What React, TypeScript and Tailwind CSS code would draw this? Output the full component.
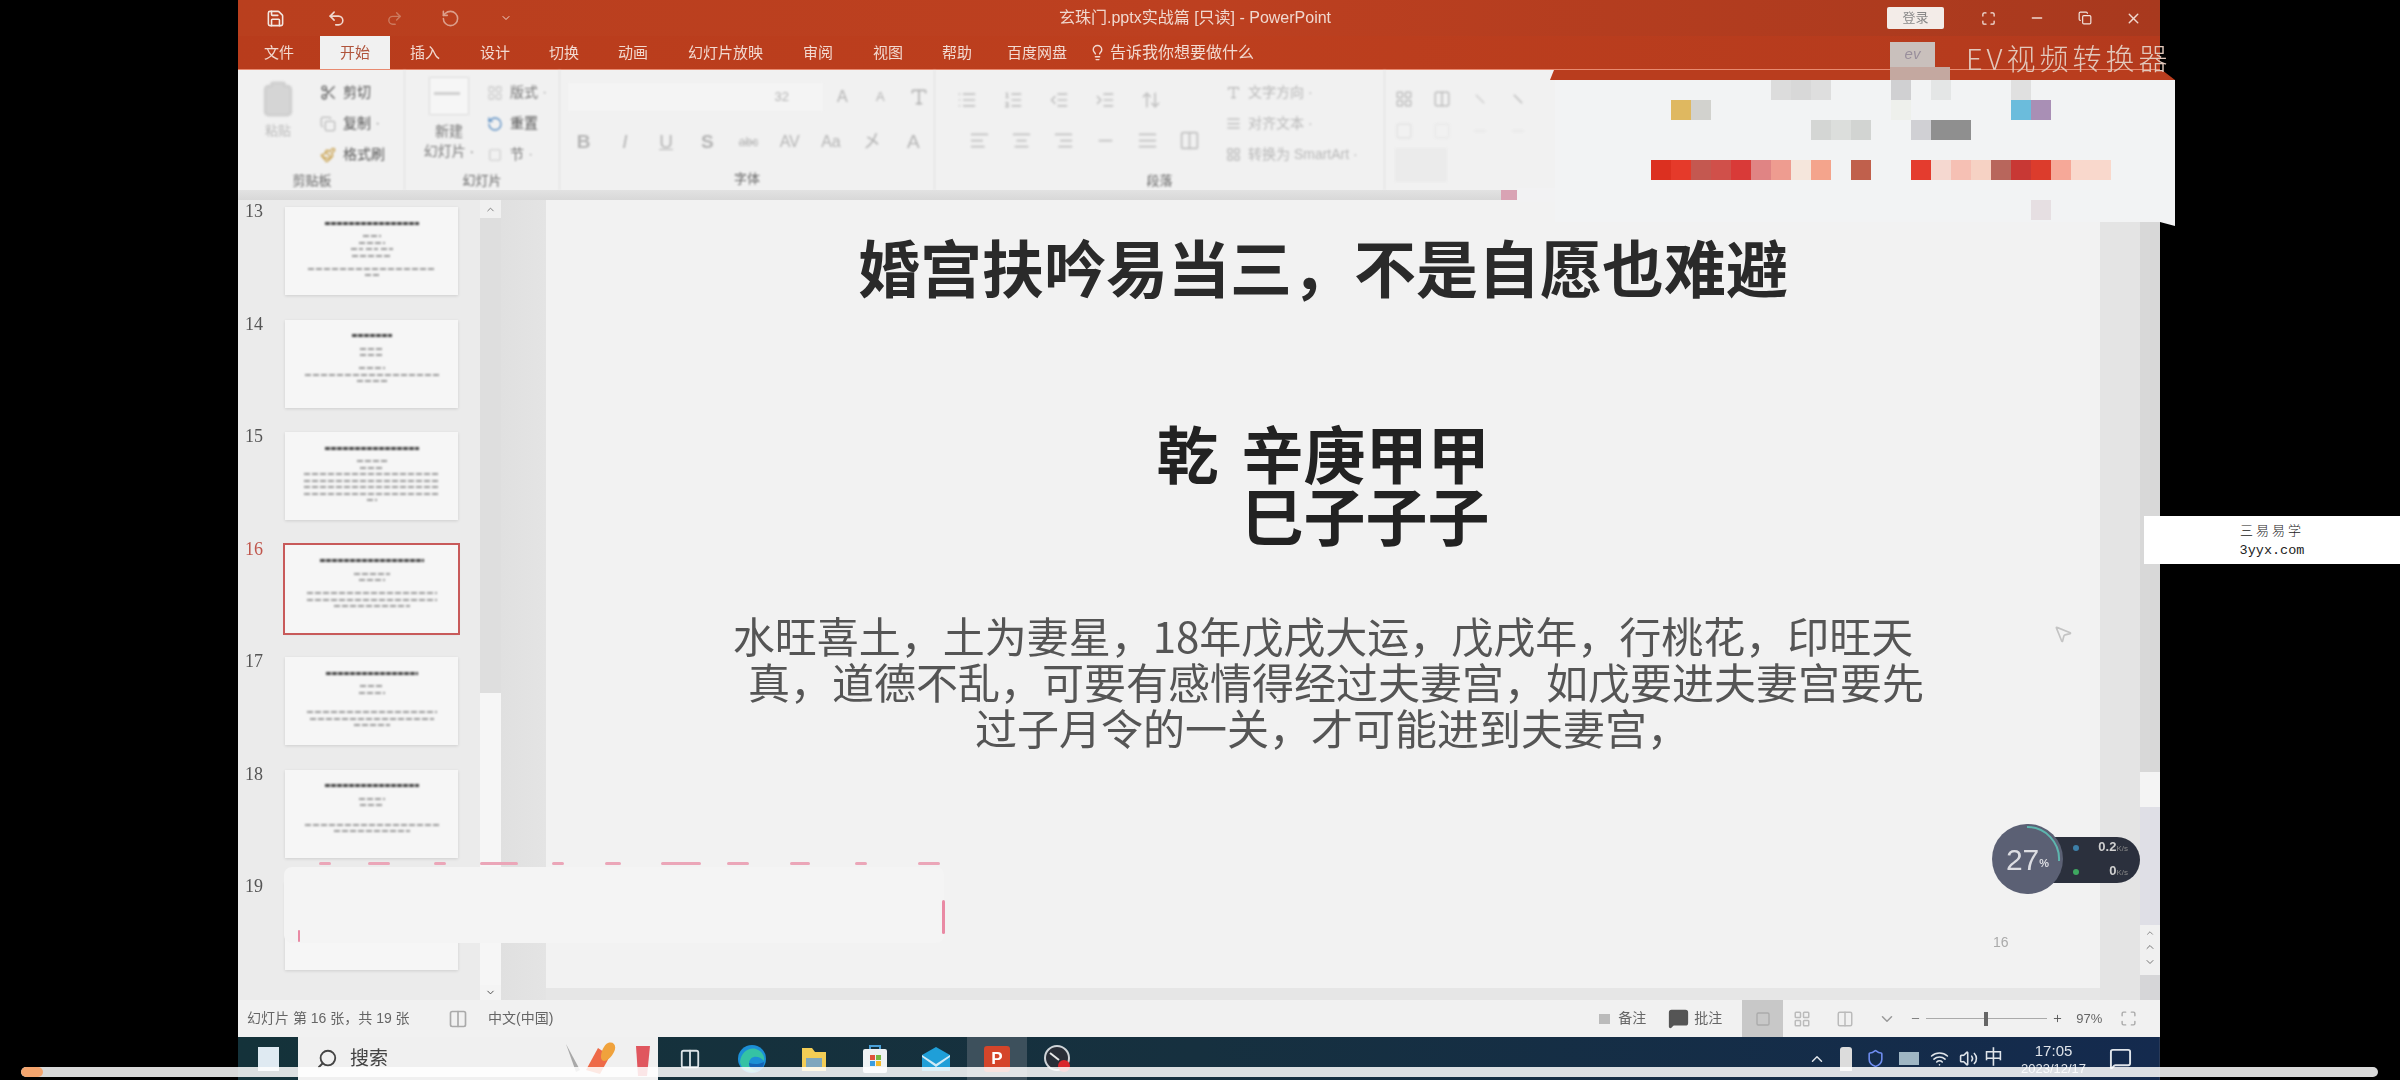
import React from 'react';
import {
  AlignCenter, AlignJustify, AlignLeft, AlignRight, ArrowUpDown, ChevronDown, ChevronUp, Clipboard, Columns2, Copy,
  IndentDecrease, IndentIncrease, LayoutGrid, Lightbulb, List, ListOrdered, Maximize, MessageSquare, Minus,
  MousePointer2, Paintbrush, Plus, Redo2, RotateCcw, Save, Scissors, Search, Shield, Square, Type, Undo2, Volume2, Wifi, X,
} from 'lucide-react';

const sans = "font-['Liberation_Sans','Noto_Sans_CJK_SC',sans-serif]";

const tabs = [
  { label: '文件', w: 82 },
  { label: '开始', w: 70, active: true },
  { label: '插入', w: 70 },
  { label: '设计', w: 70 },
  { label: '切换', w: 68 },
  { label: '动画', w: 70 },
  { label: '幻灯片放映', w: 115 },
  { label: '审阅', w: 70 },
  { label: '视图', w: 70 },
  { label: '帮助', w: 68 },
  { label: '百度网盘', w: 92 },
];

const thumbs = [
  { n: 13, lines: [[94], [], [18], [26], [12, 12, 12], [40], [], [128], [14]] },
  { n: 14, lines: [[40], [], [24], [24], [], [26], [134], [30]] },
  { n: 15, lines: [[94], [], [30], [24], [136], [136], [136], [136], [10]] },
  { n: 16, active: true, lines: [[104], [], [36], [26], [], [130], [130], [76]] },
  { n: 17, lines: [[92], [], [24], [26], [], [], [130], [124], [36]] },
  { n: 18, lines: [[94], [], [26], [24], [], [], [134], [76]] },
  { n: 19, lines: [] },
];

// 幻灯片上方遮挡块里的马赛克: [列, 行, 颜色]
const mosaic: [number, number, string][] = [
  [12, 1, '#dcdcdc'], [13, 1, '#d8d8d8'], [14, 1, '#dedede'], [18, 1, '#d0d0d2'], [20, 1, '#e4e6e6'], [24, 1, '#e0e0e0'],
  [7, 2, '#dfb860'], [8, 2, '#d2d2ce'], [24, 2, '#6bbcdc'], [25, 2, '#a98fb5'], [18, 2, '#eef0ec'],
  [14, 3, '#d4d6d4'], [15, 3, '#dcdedc'], [16, 3, '#d2d4d2'], [19, 3, '#d0d0d4'], [20, 3, '#8f8f8f'], [21, 3, '#8f8f8f'],
  [6, 5, '#dc3020'], [7, 5, '#e53a2a'], [8, 5, '#c45850'], [9, 5, '#d0504a'], [10, 5, '#d93a38'], [11, 5, '#e08484'], [12, 5, '#ee9c90'],
  [13, 5, '#f5e6dc'], [14, 5, '#f4a48c'], [16, 5, '#c0604c'], [19, 5, '#e43c2e'], [20, 5, '#f5d8d0'], [21, 5, '#f6c0b4'], [22, 5, '#f6d2c4'],
  [23, 5, '#b8665c'], [24, 5, '#c83834'], [25, 5, '#dc3c2c'], [26, 5, '#f6a898'], [27, 5, '#f9d8cc'], [28, 5, '#f9d8cc'],
  [25, 7, '#e6dfe2'],
];

const pinkDashes = [
  [319, 12], [368, 22], [434, 12], [480, 38], [552, 12], [605, 16], [661, 40], [727, 22], [790, 20], [855, 12], [918, 22],
];

const Thumb: React.FC<{ n: number; active?: boolean; lines: number[][] }> = ({ n, active, lines }) => (
  <div className="flex h-[112.5px] items-start">
    <div className={`-mt-[6px] w-[47px] pl-[7px] font-['Liberation_Serif',serif] text-[18px] leading-[20px] ${active ? 'text-[#c0564c]' : 'text-[#555]'}`}>{n}</div>
    <div className={`flex h-[88px] w-[173px] flex-col items-center bg-[#f6f6f6] pt-[13px] shadow-[0_1px_3px_rgba(0,0,0,0.12)] ${active ? 'outline-2 outline-[#c85a5a]' : ''}`}>
      {lines.map((row, i) => (
        <div key={i} className="flex h-[6.5px] items-center justify-center gap-[3px]">
          {row.map((w, j) => (
            <div
              key={j}
              className={`blur-[0.8px] ${i === 0 ? 'h-[3px] bg-[repeating-linear-gradient(90deg,#444_0_5px,transparent_5px_6px)]' : 'h-[2px] bg-[repeating-linear-gradient(90deg,#999_0_6px,transparent_6px_8px)]'}`}
              style={{ width: w }}
            />
          ))}
        </div>
      ))}
    </div>
  </div>
);

const SmallTool: React.FC<{ icon: React.ReactNode; label: string; caret?: boolean; className?: string }> = ({ icon, label, caret, className = '' }) => (
  <div className={`flex h-[31px] items-center gap-[5px] whitespace-nowrap text-[14px] ${className}`}>
    <span className="flex w-[20px] justify-center">{icon}</span>
    <span>{label}</span>
    {caret && <span className="text-[10px]">·</span>}
  </div>
);

const Group: React.FC<{ label: string; className: string; children: React.ReactNode }> = ({ label, className, children }) => (
  <div className={`flex h-full shrink-0 flex-col border-r border-[#e2e2e2] ${className}`}>
    <div className="flex-1">{children}</div>
    <div className="h-[22px] pt-[1px] text-center text-[13px] leading-[20px] text-[#666]">{label}</div>
  </div>
);

const Ribbon: React.FC = () => (
  <div className="flex h-[130px] shrink-0 flex-col bg-[#f1f1f1]">
    <div className="flex h-[120px] blur-[0.9px]">
      <Group label="剪贴板" className="w-[167px] pr-[18px]">
        <div className="flex pt-[7px]">
          <div className="flex w-[80px] flex-col items-center pt-[3px] text-[13px] text-[#bbb]">
            <Clipboard size={38} strokeWidth={2} className="fill-[#d5d5d5] text-[#d0d0d0]" />
            <span className="mt-[3px]">粘贴</span>
          </div>
          <div className="text-[#555]">
            <SmallTool icon={<Scissors size={17} className="text-[#666]" />} label="剪切" />
            <SmallTool icon={<Copy size={16} className="text-[#bbb]" />} label="复制" caret />
            <SmallTool icon={<Paintbrush size={16} className="text-[#c9a04a]" />} label="格式刷" />
          </div>
        </div>
      </Group>
      <Group label="幻灯片" className="w-[155px]">
        <div className="flex pt-[7px]">
          <div className="flex w-[88px] flex-col items-center text-[14px] leading-[20px] text-[#777]">
            <div className="h-[38px] w-[40px] border border-[#dcdcdc] bg-[#f6f6f6] pl-[4px] pt-[14px]">
              <div className="h-[3px] w-[26px] bg-[#d0d0d0]" />
            </div>
            <span className="mt-[6px]">新建</span>
            <span>幻灯片 ·</span>
          </div>
          <div className="text-[#777]">
            <SmallTool icon={<LayoutGrid size={16} className="text-[#ccc]" />} label="版式" caret className="-ml-[8px]" />
            <SmallTool icon={<RotateCcw size={16} className="text-[#5b8fc4]" />} label="重置" className="-ml-[8px] text-[#555]" />
            <SmallTool icon={<Square size={14} className="text-[#ccc]" />} label="节" caret className="-ml-[8px]" />
          </div>
        </div>
      </Group>
      <Group label="字体" className="w-[375px] text-[#b4b4b4]">
        <div className="flex h-[26px] items-center mt-[14px] pl-[8px]">
          <div className="flex h-[28px] w-[255px] items-center justify-end bg-[#f4f4f4] pr-[34px] text-[13px]">32</div>
          <span className="w-[41px] pl-[14px] text-[16px]">A</span>
          <span className="w-[41px] pl-[12px] text-[13px]">A</span>
          <Type size={20} className="ml-[4px]" />
        </div>
        <div className="mt-[16px] flex pl-[3px] text-[19px] leading-[32px]">
          {['B', 'I', 'U', 'S', 'abc', 'AV', 'Aa', '㐅', 'A'].map((t, i) => (
            <span key={i} className={`w-[42px] text-center ${t === 'B' ? 'font-bold' : ''} ${t === 'I' ? 'italic' : ''} ${t === 'U' ? 'underline' : ''} ${t === 'S' ? 'font-bold' : ''} ${t === 'abc' ? 'text-[12px] line-through' : ''} ${t === 'Aa' || t === 'AV' ? 'text-[16px]' : ''}`}>{t}</span>
          ))}
        </div>
      </Group>
      <Group label="段落" className="w-[450px] text-[#c2c2c2]">
        <div className="flex">
          <div className="w-[288px] pt-[20px] pl-[22px]">
            <div className="flex items-center gap-[26px]">
              <List size={20} />
              <ListOrdered size={20} />
              <IndentDecrease size={20} />
              <IndentIncrease size={20} />
              <ArrowUpDown size={20} />
            </div>
            <div className="mt-[20px] flex items-center gap-[21px] pl-[12px]">
              <AlignLeft size={21} />
              <AlignCenter size={21} />
              <AlignRight size={21} />
              <Minus size={21} />
              <AlignJustify size={21} />
              <Columns2 size={21} />
            </div>
          </div>
          <div className="pt-[7px] text-[#b8b8b8]">
            <SmallTool icon={<Type size={15} />} label="文字方向 ·" />
            <SmallTool icon={<AlignJustify size={15} />} label="对齐文本 ·" />
            <SmallTool icon={<LayoutGrid size={15} />} label="转换为 SmartArt ·" />
          </div>
        </div>
      </Group>
      <div className="flex w-[170px] shrink-0 flex-col pl-[10px] pt-[20px] text-[#cfcfcf]">
        <div className="flex gap-[20px]">
          <LayoutGrid size={18} className="text-[#bdbdbd]" />
          <Columns2 size={18} className="text-[#bdbdbd]" />
          <Minus size={18} className="rotate-45" />
          <Minus size={18} className="rotate-45 text-[#bdbdbd]" />
        </div>
        <div className="mt-[14px] flex gap-[20px]">
          <Square size={18} className="text-[#e2e2e2]" />
          <Square size={18} className="text-[#e8e8e8]" />
          <Minus size={18} className="text-[#e6e6e6]" />
          <Minus size={18} className="text-[#e6e6e6]" />
        </div>
        <div className="mt-[8px] h-[34px] w-[52px] bg-[#ebebeb]" />
      </div>
    </div>
    <div className="h-[10px] bg-linear-to-b from-[#e2e2e2] to-[#d8d8d8]" />
  </div>
);

const SlideContent: React.FC = () => (
  <div className="flex h-full flex-1 flex-col items-center bg-[#f2f2f2] pt-[35px] font-['Noto_Sans_CJK_SC',sans-serif] blur-[0.6px]">
    <h1 className="text-[62px] font-bold leading-[62px] text-[#2a2a2a]">婚宫扶吟易当三，不是自愿也难避</h1>
    <div className="mt-[124px] w-[333px] text-[62px] font-bold leading-[62px] text-[#222]">
      <div className="flex justify-between">
        <span>乾</span>
        <span>辛庚甲甲</span>
      </div>
      <div className="text-right">巳子子子</div>
    </div>
    <div className="mt-[67px] text-center text-[42px] leading-[46px] text-[#555]">
      <p>水旺喜土，土为妻星，18年戊戌大运，戊戌年，行桃花，印旺天</p>
      <p className="ml-[26px]">真，道德不乱，可要有感情得经过夫妻宫，如戊要进夫妻宫要先</p>
      <p className="ml-[18px]">过子月令的一关，才可能进到夫妻宫，</p>
    </div>
  </div>
);

const TaskIcons: React.FC = () => (
  <div className="flex h-full items-center">
    <div className="flex h-full w-[63px] items-center justify-center"><Columns2 size={22} className="text-[#dbe3e6]" /></div>
    <div className="flex h-full w-[62px] items-center justify-center">
      <svg width="30" height="30" viewBox="0 0 30 30">
        <circle cx="15" cy="15" r="14" fill="#1c8fd6" />
        <path d="M3 18C4 8 12 3 19 5c6 2 9 7 8 12-5-6-14-6-15 2-1 5 4 8 9 8-9 3-17-2-18-9z" fill="#35c2a4" />
        <path d="M12 19c0 5 5 8 10 7 3-1 5-4 5-8-4 2-9 3-15 1z" fill="#1463b5" />
      </svg>
    </div>
    <div className="flex h-full w-[62px] items-center justify-center">
      <svg width="28" height="28" viewBox="0 0 28 28">
        <path d="M2 3h10l3 4h11v19H2z" fill="#f3cd55" />
        <path d="M6 13h16v9H6z" fill="#7fa7bd" />
      </svg>
    </div>
    <div className="flex h-full w-[60px] items-center justify-center">
      <svg width="26" height="30" viewBox="0 0 26 30">
        <rect x="1" y="5" width="24" height="24" rx="2" fill="#eef2f4" />
        <path d="M8 5V2h10v3" fill="none" stroke="#4aa0d8" strokeWidth="2" />
        <rect x="8" y="11" width="5" height="5" fill="#e0533c" />
        <rect x="14" y="11" width="5" height="5" fill="#76b843" />
        <rect x="8" y="17" width="5" height="5" fill="#3b9de0" />
        <rect x="14" y="17" width="5" height="5" fill="#f3bb2e" />
      </svg>
    </div>
    <div className="flex h-full w-[62px] items-center justify-center">
      <svg width="32" height="28" viewBox="0 0 32 28">
        <path d="M2 10 16 2l14 8v16H2z" fill="#1f9fd8" />
        <path d="M2 10l14 9 14-9v2L16 22 2 12z" fill="#cfeaf6" />
      </svg>
    </div>
    <div className="flex h-full w-[60px] items-center justify-center bg-[#3d505c]">
      <div className="flex h-[26px] w-[26px] items-center justify-center rounded-[3px] bg-[#d5452a] text-[17px] font-bold text-white">P</div>
    </div>
    <div className="flex h-full w-[60px] items-center justify-center">
      <svg width="30" height="30" viewBox="0 0 30 30">
        <circle cx="15" cy="14" r="12" fill="#2a2f38" stroke="#cfd4d8" strokeWidth="2" />
        <path d="M8 9l9 7" stroke="#e8e8e8" strokeWidth="2" />
        <circle cx="22" cy="22" r="6" fill="#d8262c" />
      </svg>
    </div>
  </div>
);

const App: React.FC = () => (
  <div className={`relative h-[1080px] w-[2400px] overflow-hidden bg-black ${sans}`}>
    <div className="ml-[238px] flex h-full w-[1922px] flex-col">
      {/* Title bar */}
      <div className="flex h-[36px] shrink-0 items-center bg-linear-to-r from-[#b93f1e] via-[#bd4020] to-[#a8391e] pl-[28px] text-[#f0d8cf] blur-[0.6px]">
        <Save size={19} className="text-[#f3e6e0]" />
        <Undo2 size={19} className="ml-[42px]" />
        <Redo2 size={17} className="ml-[40px] text-[#cc7a5f]" />
        <RotateCcw size={19} className="ml-[38px] text-[#dc9f8c]" />
        <ChevronDown size={12} className="ml-[40px]" />
        <div className="ml-[547px] w-[280px] whitespace-nowrap text-[16px]">玄珠门.pptx实战篇 [只读]  -  PowerPoint</div>
        <div className="ml-[548px] flex h-[22px] w-[57px] items-center justify-center rounded-[2px] bg-[#f3ece8] text-[13px] text-[#888]">登录</div>
        <Maximize size={15} className="ml-[37px] text-[#f3e6e0]" />
        <Minus size={16} className="ml-[33px]" />
        <Copy size={14} className="ml-[33px] text-[#f3e6e0]" />
        <X size={17} className="ml-[33px]" />
      </div>
      {/* Tabs */}
      <div className="flex h-[34px] shrink-0 items-stretch border-b border-[#e88a70] bg-linear-to-r from-[#b83c1c] via-[#bd3f1e] to-[#b43a1d] text-[15px] leading-[34px] text-[#f2d9d0] blur-[0.6px]">
        {tabs.map((t) => (
          <div key={t.label} className={`flex items-center justify-center ${t.active ? 'bg-[#f1f1f1] text-[#b0543c]' : ''}`} style={{ width: t.w }}>
            {t.label}
          </div>
        ))}
        <div className="ml-[6px] flex items-center gap-[4px] text-[16px]">
          <Lightbulb size={17} />
          告诉我你想要做什么
        </div>
      </div>

      <Ribbon />

      {/* Thumbnails, slide and scrollbars */}
      <div className="flex min-h-0 flex-1 bg-[#e6e6e6]">
        <div className="w-[242px] shrink-0 bg-[#ebebeb] pt-[7px] blur-[0.3px]">
          {thumbs.map((t) => (
            <Thumb key={t.n} n={t.n} active={t.active} lines={t.lines} />
          ))}
        </div>
        <div className="flex w-[21px] shrink-0 flex-col items-center bg-[#dedede]">
          <div className="flex h-[18px] w-full items-center justify-center bg-[#f0f0f0]"><ChevronUp size={11} className="text-[#777]" /></div>
          <div className="h-[475px]" />
          <div className="h-[292px] w-full bg-[#f6f6f6]" />
          <div className="flex h-[15px] w-full items-center justify-center bg-[#f4f4f4]"><ChevronDown size={11} className="text-[#444]" /></div>
        </div>
        <div className="w-[45px] shrink-0 bg-linear-to-r from-[#e0e0e0] to-[#e4e4e4]" />
        <div className="flex flex-1 flex-col pb-[12px]">
          <SlideContent />
        </div>
        <div className="w-[40px] shrink-0 bg-[#e4e4e4]" />
        <div className="flex w-[20px] shrink-0 flex-col bg-[#d6d6d8]">
          <div className="h-[572px] bg-[#d8d8d8]" />
          <div className="h-[35px] bg-[#f4f4f4]" />
          <div className="h-[118px] bg-[#dfdfe6]" />
          <div className="flex h-[50px] flex-col items-center bg-[#f0f0f0] pt-[3px] text-[#777]">
            <ChevronUp size={10} />
            <ChevronUp size={12} className="mt-[3px]" />
            <ChevronDown size={12} className="mt-[3px]" />
          </div>
        </div>
      </div>

      {/* Status bar */}
      <div className="flex h-[37px] shrink-0 items-center bg-[#f1f1f1] pl-[9px] text-[14px] text-[#666] blur-[0.6px]">
        <span className="w-[201px] whitespace-nowrap">幻灯片 第 16 张，共 19 张</span>
        <Columns2 size={20} className="text-[#aaa]" />
        <span className="ml-[20px]">中文(中国)</span>
        <div className="ml-[1046px] flex items-center gap-[8px]">
          <span className="h-[10px] w-[11px] bg-[#bbb]" />
          <span>备注</span>
        </div>
        <div className="ml-[22px] flex items-center gap-[5px]">
          <MessageSquare size={21} className="fill-[#555] text-[#555]" />
          <span>批注</span>
        </div>
        <div className="ml-[20px] flex h-full w-[41px] items-center justify-center bg-[#c8c8c8]">
          <Square size={16} className="text-[#aaa]" />
        </div>
        <LayoutGrid size={18} className="ml-[10px] text-[#bbb]" />
        <Columns2 size={18} className="ml-[25px] text-[#bbb]" />
        <ChevronDown size={18} className="ml-[24px] text-[#999]" />
        <Minus size={11} className="ml-[14px] text-[#777]" />
        <div className="ml-[5px] flex w-[121px] items-center">
          <div className="h-px w-[58px] bg-[#aaa]" />
          <div className="h-[14px] w-[4px] bg-[#666]" />
          <div className="h-px flex-1 bg-[#aaa]" />
        </div>
        <Plus size={11} className="ml-[5px] text-[#555]" />
        <span className="ml-[13px] text-[13px]">97%</span>
        <Maximize size={17} className="ml-[18px] text-[#aaa]" />
      </div>

      {/* Taskbar */}
      <div className="flex h-[43px] shrink-0 items-stretch border-r border-[#2a3a58] bg-linear-to-r from-[#14323a] via-[#16303f] to-[#142a4e]">
        <div className="flex w-[60px] items-center justify-center">
          <div className="h-[24px] w-[21px] bg-[#dfeaf2] blur-[0.6px]" />
        </div>
        <div className="flex w-[360px] items-center bg-[#f0f0f0] pl-[18px] text-[19px] text-[#444]">
          <Search size={22} className="-scale-x-100 text-[#444]" />
          <span className="ml-[12px] mt-[2px] blur-[0.6px]">搜索</span>
          <svg width="90" height="38" viewBox="0 0 90 38" className="ml-[176px] blur-[0.5px]">
            <path d="M2 4l10 28 4-2z" fill="#a8a8a8" />
            <path d="M22 30 34 8l12 8-10 18z" fill="#ee6a48" />
            <path d="M44 3c6-2 9 3 6 9s-9 11-12 8 1-15 6-17z" fill="#f0a23c" />
            <path d="M72 6h14l-3 30H74z" fill="#e0565e" />
          </svg>
        </div>
        <div className="blur-[0.5px]"><TaskIcons /></div>
        <div className="ml-[721px] flex items-center text-[#dfe4ea] blur-[0.5px]">
          <ChevronUp size={18} />
          <div className="ml-[14px] h-[24px] w-[12px] rounded-t-[3px] bg-[#dcdcdc]" />
          <Shield size={19} className="ml-[14px] text-[#6f8df0]" />
          <div className="ml-[14px] h-[13px] w-[20px] bg-[#9fb6c4]" />
          <Wifi size={19} className="ml-[11px]" />
          <Volume2 size={19} className="ml-[10px]" />
          <span className="ml-[6px] text-[19px]">中</span>
          <div className="ml-[18px] flex flex-col items-center text-[15px] leading-[20px]">
            <span>17:05</span>
            <span className="text-[13px] leading-[16px]">2023/12/17</span>
          </div>
          <MessageSquare size={23} className="ml-[23px]" />
        </div>
      </div>
    </div>

    {/* EV 水印 + 马赛克遮挡块 */}
    <div className="absolute left-[1550px] top-[70px] h-[10px] w-[625px] bg-[#b93d1e] [clip-path:polygon(4px_0,612px_0,100%_100%,0_100%)]" />
    <div className="absolute left-[1890px] top-[42px] flex h-[25px] w-[45px] items-center justify-center bg-[#c9c0bc] text-[15px] italic text-[#9a8f9c] blur-[0.5px]">ev</div>
    <div className="absolute left-[1890px] top-[67px] h-[13px] w-[60px] bg-[#c4a8a0]" />
    <div className="absolute left-[1966px] top-[39px] whitespace-nowrap font-['Noto_Sans_CJK_SC',sans-serif] text-[29px] font-light leading-[36px] tracking-[4px] text-[#e2c8bc] blur-[0.6px]">EV视频转换器</div>
    <div className="absolute left-[1517px] top-[188px] h-[14px] w-[40px] bg-[#f2f2f3]" />
    <div className="absolute left-[1555px] top-[80px] h-[146px] w-[620px] bg-[#f2f3f4] [clip-path:polygon(0_0,100%_0,100%_100%,605px_142px,0_142px)]" />
    <div className="absolute left-[1531px] top-[80px] grid grid-cols-[repeat(31,20px)] grid-rows-[repeat(7,20px)] blur-[0.4px]">
      {mosaic.map(([col, row, color]) => (
        <div key={`${col}-${row}`} style={{ gridColumn: col + 1, gridRow: row, backgroundColor: color }} />
      ))}
    </div>
    <div className="absolute left-[1501px] top-[190px] h-[10px] w-[16px] bg-[#d9a3b4]" />

    {/* 第 19 张缩略图上的白色遮挡 */}
    <div className="absolute left-[284px] top-[867px] h-[76px] w-[660px] rounded-[8px] bg-[#f4f4f4]" />
    {pinkDashes.map(([left, width]) => (
      <div key={left} className="absolute top-[862px] h-[3px] rounded-full bg-[#eba6b8] blur-[0.7px]" style={{ left, width }} />
    ))}
    <div className="absolute left-[942px] top-[900px] h-[34px] w-[3px] rounded-full bg-[#e98aa4] blur-[0.5px]" />
    <div className="absolute left-[298px] top-[930px] h-[12px] w-[2px] rounded-full bg-[#e98aa4] blur-[0.5px]" />

    {/* 鼠标 */}
    <MousePointer2 size={20} className="absolute left-[2053px] top-[624px] text-[#c4c4c4] blur-[0.5px]" />

    {/* 页码 */}
    <div className="absolute left-[1993px] top-[932px] text-[14px] text-[#aaa] blur-[0.4px]">16</div>

    {/* 网速悬浮球 */}
    <div className="absolute left-[2000px] top-[837px] flex h-[46px] w-[140px] items-center justify-end rounded-full bg-[#2b303d] pr-[12px] blur-[0.5px]">
      <div className="flex w-[55px] flex-col text-[#d0d0d0]">
        <div className="flex items-center justify-between">
          <span className="h-[6px] w-[6px] rounded-full bg-[#3d7fa8]" />
          <span className="text-[13px] font-bold leading-[22px]">0.2<span className="text-[8px] font-normal text-[#888]">K/s</span></span>
        </div>
        <div className="flex items-center justify-between">
          <span className="h-[6px] w-[6px] rounded-full bg-[#3ea860]" />
          <span className="text-[13px] font-bold leading-[22px]">0<span className="text-[8px] font-normal text-[#888]">K/s</span></span>
        </div>
      </div>
    </div>
    <div className="absolute left-[1992px] top-[824px] flex h-[70px] w-[71px] items-center justify-center rounded-full bg-[#5b6074] text-[30px] text-[#dcdde2] blur-[0.5px]">
      27<span className="mt-[8px] text-[11px] font-bold">%</span>
      <svg width="71" height="70" viewBox="0 0 71 70" className="absolute left-0 top-0">
        <path d="M35 3a32 32 0 0 1 32 34" fill="none" stroke="#5db5ae" strokeWidth="2" />
      </svg>
    </div>

    {/* 站点水印 */}
    <div className="absolute left-[2144px] top-[516px] flex h-[48px] w-[256px] flex-col items-center justify-center bg-white text-[#222]">
      <span className="font-['Noto_Sans_CJK_SC',sans-serif] text-[13px] font-light leading-[22px] tracking-[3px]">三易易学</span>
      <span className="font-['Liberation_Mono',monospace] text-[13.5px] leading-[20px]">3yyx.com</span>
    </div>

    {/* 播放进度条 */}
    <div className="absolute left-[21px] top-[1067px] h-[10px] w-[2357px] overflow-hidden rounded-full bg-white/85 blur-[0.4px]">
      <div className="h-full w-[22px] rounded-full bg-[#f4a56e]" />
    </div>
  </div>
);

export default App;
